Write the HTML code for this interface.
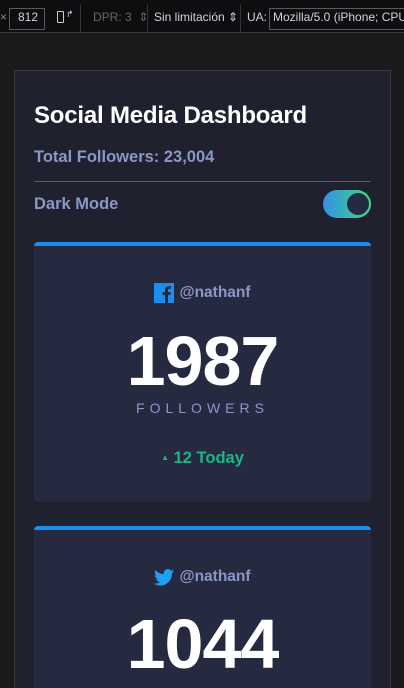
<!DOCTYPE html>
<html style="overflow:hidden;height:688px"><head><meta charset="utf-8"><style>
*{margin:0;padding:0;box-sizing:border-box}
body{width:404px;height:688px;overflow:hidden;background:#1b1b1d;font-family:"Liberation Sans",sans-serif;position:relative}
.bar{position:absolute;left:0;top:0;width:404px;height:33px;background:#0e0e10;border-bottom:1px solid #3a3a3c;color:#cfd3da;font-size:12px;white-space:nowrap;overflow:hidden}
.bar span{position:absolute;top:10px;white-space:nowrap}
.box{position:absolute;border:1px solid #5a5a5a;}
.panel{position:absolute;left:14px;top:70px;width:377px;height:618px;background:#1f212e;border:1px solid #3a3a3d;border-bottom:none}
.abs{position:absolute}
h1{position:absolute;left:34px;top:102px;color:#fff;font-size:24px;font-weight:bold;letter-spacing:-0.2px}
.card{position:absolute;left:34px;width:337px;background:#252a41;border-top:4px solid #1b8ef0;border-radius:4px;text-align:center;overflow:hidden}
.handle{color:#8b97c6;font-weight:bold;font-size:15.5px}
.num{color:#fff;font-weight:bold;font-size:70px;letter-spacing:-1px}
.fol{color:#8b97c6;font-size:14px;letter-spacing:5px}
</style></head><body>
<div class="bar">
<span style="left:0;color:#888">×</span>
<div class="box" style="left:9px;top:8px;width:36px;height:22px"></div><span style="left:18px">812</span>
<div class="abs" style="left:57px;top:11px;width:7px;height:12px;border:1.5px solid #ccc;border-radius:1px"></div><span style="left:66px;top:9px;font-size:9px">↱</span>
<div class="abs" style="left:80px;top:4px;width:1px;height:28px;background:#333"></div>
<span style="left:93px;color:#666">DPR: 3 &nbsp;⇕</span>
<div class="abs" style="left:147px;top:4px;width:1px;height:28px;background:#333"></div>
<span style="left:154px">Sin limitación ⇕</span>
<div class="abs" style="left:240px;top:4px;width:1px;height:28px;background:#333"></div>
<span style="left:247px">UA:</span>
<div class="box" style="left:269px;top:8px;width:140px;height:22px"></div><span style="left:273px">Mozilla/5.0 (iPhone; CPU</span>
</div>
<div class="panel"></div>
<h1>Social Media Dashboard</h1>
<div class="abs" style="left:34px;top:148px;color:#8b97c6;font-weight:bold;font-size:16.5px">Total Followers: 23,004</div>
<div class="abs" style="left:34px;top:181px;width:337px;height:1px;background:#5a5c66"></div>
<div class="abs" style="left:34px;top:195px;color:#8b97c6;font-weight:bold;font-size:16.5px">Dark Mode</div>
<div class="abs" style="left:323px;top:190px;width:48px;height:28px;border-radius:14px;background:linear-gradient(90deg,#378fe6,#3eda82)"></div>
<div class="abs" style="left:347px;top:193px;width:22px;height:22px;border-radius:50%;background:#252a41"></div>

<div class="card" style="top:242px;height:260px">
<div class="handle" style="margin-top:37px;display:flex;justify-content:center;align-items:center;gap:5px">
<svg width="20" height="20" viewBox="0 0 20 20"><rect width="20" height="20" fill="#1b8ef0"/><path d="M11 20V12H8.5V9H11V7c0-2.5 1.5-3.8 3.7-3.8 1 0 1.8.1 2.1.1v2.5h-1.4c-1.2 0-1.4.6-1.4 1.4V9h2.8l-.4 3H14v8z" fill="#252a41"/></svg>@nathanf</div>
<div class="num" style="margin-top:16px;line-height:84px">1987</div>
<div class="fol" style="margin-top:-3px">FOLLOWERS</div>
<div style="margin-top:33px;color:#1db489;font-weight:bold;font-size:16.5px"><span style="font-size:8px;vertical-align:3px">▲</span> 12 Today</div>
</div>

<div class="card" style="top:526px;height:162px;border-bottom-left-radius:0;border-bottom-right-radius:0">
<div class="handle" style="margin-top:38px;display:flex;justify-content:center;align-items:center;gap:5px">
<svg width="20" height="17" viewBox="0 0 24 20"><path d="M24 2.4c-.9.4-1.8.7-2.8.8 1-.6 1.8-1.6 2.2-2.7-1 .6-2 1-3.1 1.2C19.3.7 18 0 16.6 0c-2.7 0-4.9 2.2-4.9 4.9 0 .4 0 .8.1 1.1C7.7 5.8 4.1 3.9 1.7.9c-.4.7-.7 1.600-.7 2.5 0 1.7.9 3.2 2.2 4.1-.8 0-1.6-.2-2.2-.6v.1c0 2.4 1.7 4.4 3.9 4.8-.4.1-.8.2-1.3.2-.3 0-.6 0-.9-.1.6 2 2.4 3.4 4.6 3.4-1.7 1.3-3.8 2.1-6.1 2.1-.4 0-.8 0-1.2-.1C2.2 18.8 4.8 19.6 7.5 19.6c9.1 0 14-7.5 14-14v-.6c1-.7 1.800-1.6 2.5-2.6z" fill="#1da1f2"/></svg>@nathanf</div>
<div class="num" style="margin-top:16px;line-height:84px">1044</div>
</div>
</body></html>
